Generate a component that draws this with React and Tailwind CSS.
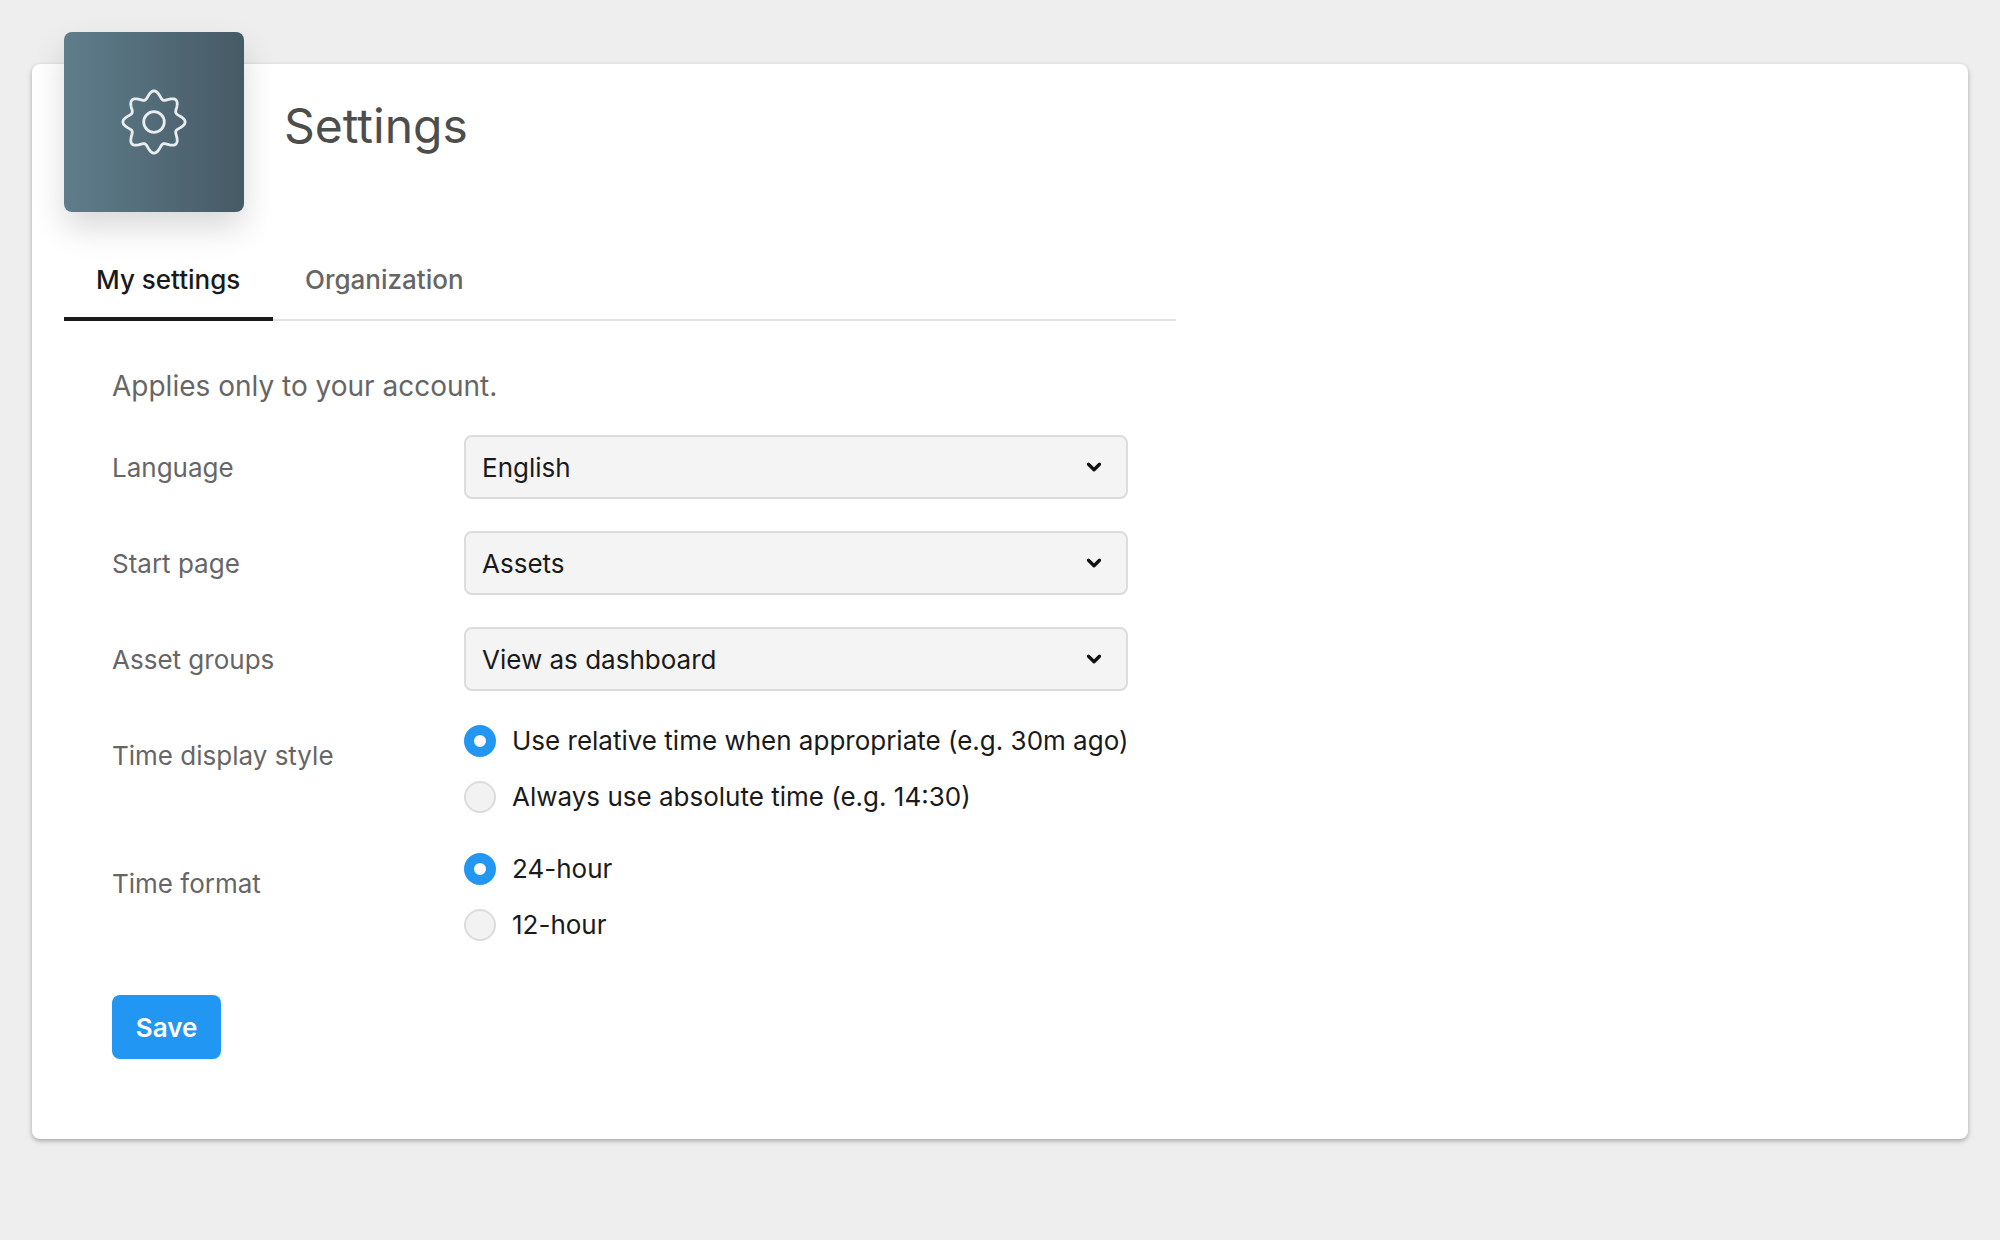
import React from 'react';
import { ChevronDown } from 'lucide-react';

// wavy 8 lobe gear outline
const gearPath = () => {
  const pts = [];
  for (let i = 0; i < 240; i++) {
    const t = (i / 240) * Math.PI * 2;
    const r = 27.4 + 3.7 * Math.cos(8 * t);
    const a = t - Math.PI / 2;
    pts.push(`${(40 + r * Math.cos(a)).toFixed(2)} ${(40 + r * Math.sin(a)).toFixed(2)}`);
  }
  return `M${pts.join('L')}Z`;
};

const SelectField = ({ label, value }) => (
  <div className="flex items-center h-16">
    <div className="w-[352px] text-[#666]">{label}</div>
    <div className="w-[664px] h-16 flex items-center justify-between pl-4 pr-[21px] bg-[#f4f4f4] border-2 border-[#dcdcdc] rounded-lg text-[#1a1a1a]">
      <span>{value}</span>
      <ChevronDown className="w-[22px] h-[22px] text-[#111]" strokeWidth={3.5} />
    </div>
  </div>
);

const Radio = ({ label, checked }) => (
  <div className="flex items-center gap-4 h-8 text-[#1a1a1a]">
    {checked ? (
      <span className="w-8 h-8 rounded-full border-[10px] border-[#2196f3] bg-white" />
    ) : (
      <span className="w-8 h-8 rounded-full border-2 border-[#dcdcdc] bg-[#f2f2f2]" />
    )}
    <span className="pb-0.5">{label}</span>
  </div>
);

const RadioField = ({ label, options }) => (
  <div className="flex items-center">
    <div className="w-[352px] pb-7 text-[#666]">{label}</div>
    <div className="flex flex-col gap-6">
      {options.map((o) => (
        <Radio key={o.label} label={o.label} checked={o.checked} />
      ))}
    </div>
  </div>
);

export default function App() {
  return (
    <div className="min-h-[1240px] bg-[#eeeeee] pt-16 px-8 font-['Inter',sans-serif] text-[26px]">
      <div className="h-[1075px] bg-white rounded-lg shadow-[0_2px_5px_rgba(0,0,0,0.3)] pl-8">
        <div className="flex">
          <div className="w-[180px] h-[180px] -mt-8 rounded-lg bg-gradient-to-r from-[#5f7d8b] to-[#465a65] shadow-[0_16px_32px_rgba(0,0,0,0.15)] flex items-center justify-center">
            <svg width="80" height="80" viewBox="0 0 80 80" fill="none" stroke="#e8edf0" strokeWidth="2.8">
              <path d={gearPath()} />
              <circle cx="40" cy="40" r="10.3" />
            </svg>
          </div>
          <h1 className="ml-10 mt-[30px] text-[48px] leading-[64px] text-[#4d4d4d]">Settings</h1>
        </div>
        <div className="w-[1112px] mt-[33px] flex border-b-2 border-[#e2e2e2]">
          <div className="w-[209px] h-[76px] -mb-0.5 pl-8 pb-1 flex items-center border-b-4 border-[#1a1a1a] font-medium text-[#1a1a1a]">My settings</div>
          <div className="h-[76px] -mb-0.5 px-8 pb-1 flex items-center border-b-4 border-transparent font-medium text-[#666]">Organization</div>
        </div>
        <div className="pl-12 w-[1112px]">
          <p className="mt-[45px] text-[28px] leading-[40px] text-[#666]">Applies only to your account.</p>
          <div className="mt-[29px] flex flex-col gap-8">
            <SelectField label="Language" value="English" />
            <SelectField label="Start page" value="Assets" />
            <SelectField label="Asset groups" value="View as dashboard" />
          </div>
          <div className="mt-[34px] flex flex-col gap-10">
            <RadioField
              label="Time display style"
              options={[
                { label: 'Use relative time when appropriate (e.g. 30m ago)', checked: true },
                { label: 'Always use absolute time (e.g. 14:30)' },
              ]}
            />
            <RadioField
              label="Time format"
              options={[
                { label: '24-hour', checked: true },
                { label: '12-hour' },
              ]}
            />
          </div>
          <button className="mt-[54px] w-[109px] h-16 rounded-lg bg-[#2196f3] text-white font-semibold">Save</button>
        </div>
      </div>
    </div>
  );
}
